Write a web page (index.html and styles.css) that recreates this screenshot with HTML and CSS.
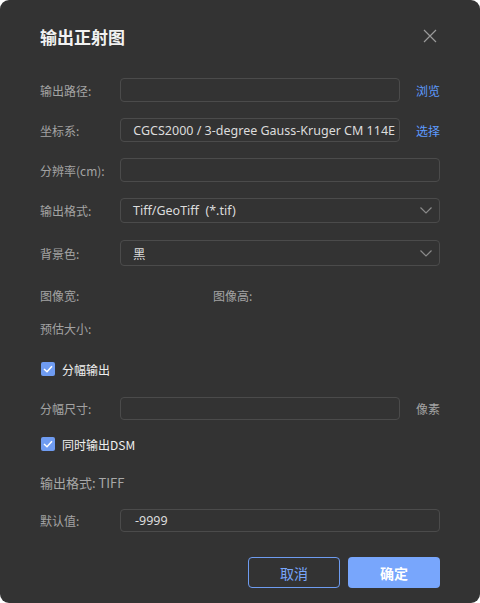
FILE: index.html
```html
<!DOCTYPE html>
<html>

<head>
    <title>输出正射图</title>
    <meta charset="utf-8">
    <meta name="viewport" content="width=device-width, initial-scale=1.0">
    <link rel="stylesheet" href="styles.css">
</head>

<body>

    <div class="dialog">
        <div class="kop">
            <h1>输出正射图</h1>
            <button class="luk" aria-label="关闭">
                <svg width="14" height="14" viewBox="0 0 14 14">
                    <path d="M1 1 L13 13 M13 1 L1 13" stroke="#9a9a9a" stroke-width="1.2" fill="none" />
                </svg>
            </button>
        </div>

        <div class="raekke r1">
            <span class="label">输出路径:</span>
            <div class="felt kort"></div>
            <a class="link">浏览</a>
        </div>

        <div class="raekke r2">
            <span class="label">坐标系:</span>
            <div class="felt kort"><div class="rul"><span>CGCS2000 / 3-degree Gauss-Kruger CM 114E</span></div></div>
            <a class="link">选择</a>
        </div>

        <div class="raekke r3">
            <span class="label">分辨率(cm):</span>
            <div class="felt"></div>
        </div>

        <div class="raekke r4">
            <span class="label">输出格式:</span>
            <div class="felt vaelg">
                <span>Tiff/GeoTiff&nbsp;&nbsp;(*.tif)</span>
                <svg width="12" height="7" viewBox="0 0 12 7"><path d="M0.5 0.5 L6 6 L11.5 0.5" stroke="#8a8a8a" stroke-width="1.2" fill="none" /></svg>
            </div>
        </div>

        <div class="raekke r5">
            <span class="label">背景色:</span>
            <div class="felt vaelg">
                <span>黑</span>
                <svg width="12" height="7" viewBox="0 0 12 7"><path d="M0.5 0.5 L6 6 L11.5 0.5" stroke="#8a8a8a" stroke-width="1.2" fill="none" /></svg>
            </div>
        </div>

        <div class="info i1">
            <span class="label">图像宽:</span>
            <span class="label hoejre">图像高:</span>
        </div>

        <div class="info i2">
            <span class="label">预估大小:</span>
        </div>

        <label class="tjek c1">
            <span class="boks"><svg width="10" height="8" viewBox="0 0 10 8"><path d="M1 4 L4 6.8 L9 1.2" stroke="#fff" stroke-width="1.5" fill="none" /></svg></span>
            分幅输出
        </label>

        <div class="raekke r6">
            <span class="label">分幅尺寸:</span>
            <div class="felt kort"></div>
            <span class="enhed">像素</span>
        </div>

        <label class="tjek c2">
            <span class="boks"><svg width="10" height="8" viewBox="0 0 10 8"><path d="M1 4 L4 6.8 L9 1.2" stroke="#fff" stroke-width="1.5" fill="none" /></svg></span>
            同时输出DSM
        </label>

        <p class="format">输出格式: TIFF</p>

        <div class="raekke r7">
            <span class="label">默认值:</span>
            <div class="felt"><span>-9999</span></div>
        </div>

        <div class="knapper">
            <button class="knap annuller">取消</button>
            <button class="knap ok">确定</button>
        </div>
    </div>

</body>

</html>
```

FILE: styles.css
```css
body {
    margin: 0;
    background: white;
    font-family: "Noto Sans", "Noto Sans CJK SC", sans-serif;
}

.dialog {
    width: 480px;
    height: 603px;
    background: #333333;
    border-radius: 9px;
    box-sizing: border-box;
    padding: 24px 40px 0 40px;
    display: flex;
    flex-direction: column;
}

.kop {
    height: 24px;
    display: flex;
    align-items: center;
    justify-content: space-between;
}

h1 {
    margin: 0;
    font-size: 17px;
    font-weight: bold;
    color: #f2f2f2;
    font-family: "Noto Sans CJK SC", sans-serif;
}

.luk {
    background: none;
    border: none;
    padding: 0;
    width: 14px;
    height: 14px;
    margin-right: 3px;
    display: flex;
}

.raekke {
    display: flex;
    align-items: center;
    height: 24px;
    margin-top: 16px;
}

.r1 {
    margin-top: 30px;
}

.r4 {
    height: 25px;
}

.r5 {
    height: 26px;
    margin-top: 17px;
}

.r6 {
    margin-top: 18px;
    height: 23px;
}

.r7 {
    margin-top: 16px;
    height: 23px;
}

.label {
    width: 80px;
    flex-shrink: 0;
    font-size: 12px;
    color: #a3a3a3;
    font-family: "Noto Sans CJK SC", sans-serif;
}

.felt {
    flex: 1;
    height: 100%;
    box-sizing: border-box;
    border: 1px solid #4b4b4b;
    border-radius: 4px;
    display: flex;
    align-items: center;
    padding: 0 12px 0 14px;
    font-size: 12.5px;
    color: #dcdcdc;
    min-width: 0;
}

.kort {
    flex: 0 0 280px;
}

.rul {
    flex: 1;
    overflow: hidden;
    display: flex;
    justify-content: flex-end;
    white-space: nowrap;
    margin-left: -2px;
    margin-right: -8px;
}

.vaelg {
    justify-content: space-between;
    padding-right: 7px;
    padding-left: 12px;
}

.vaelg span {
    font-family: "Noto Sans", "Noto Sans CJK SC", sans-serif;
}

.link,
.enhed {
    margin-left: 16px;
    font-size: 12px;
    color: #5e9bff;
    font-family: "Noto Sans CJK SC", sans-serif;
}

.enhed {
    color: #a3a3a3;
}

.info {
    display: flex;
    align-items: center;
    height: 20px;
}

.i1 {
    margin-top: 19px;
}

.i2 {
    margin-top: 13px;
}

.hoejre {
    margin-left: 93px;
}

.tjek {
    display: flex;
    align-items: center;
    height: 20px;
    font-size: 12px;
    color: #efefef;
    font-family: "Noto Sans CJK SC", sans-serif;
}

.c1 {
    margin-top: 21px;
}

.c2 {
    margin-top: 14px;
}

.boks {
    width: 14px;
    height: 14px;
    margin-left: 1px;
    margin-right: 7px;
    border-radius: 2px;
    background: #6f9cf2;
    display: flex;
    align-items: center;
    justify-content: center;
}

.format {
    margin: 19px 0 0 0;
    height: 20px;
    line-height: 20px;
    font-size: 13px;
    color: #a8a8a8;
    font-family: "Noto Sans CJK SC", sans-serif;
}

.knapper {
    display: flex;
    justify-content: flex-end;
    gap: 8px;
    margin-top: 25px;
}

.knap {
    width: 92px;
    height: 31px;
    border-radius: 4px;
    font-size: 14px;
    font-family: "Noto Sans CJK SC", sans-serif;
}

.annuller {
    background: transparent;
    border: 1px solid #6e9cf0;
    color: #78a6fb;
}

.ok {
    background: #78a6fc;
    border: none;
    color: white;
    font-weight: bold;
}
```
